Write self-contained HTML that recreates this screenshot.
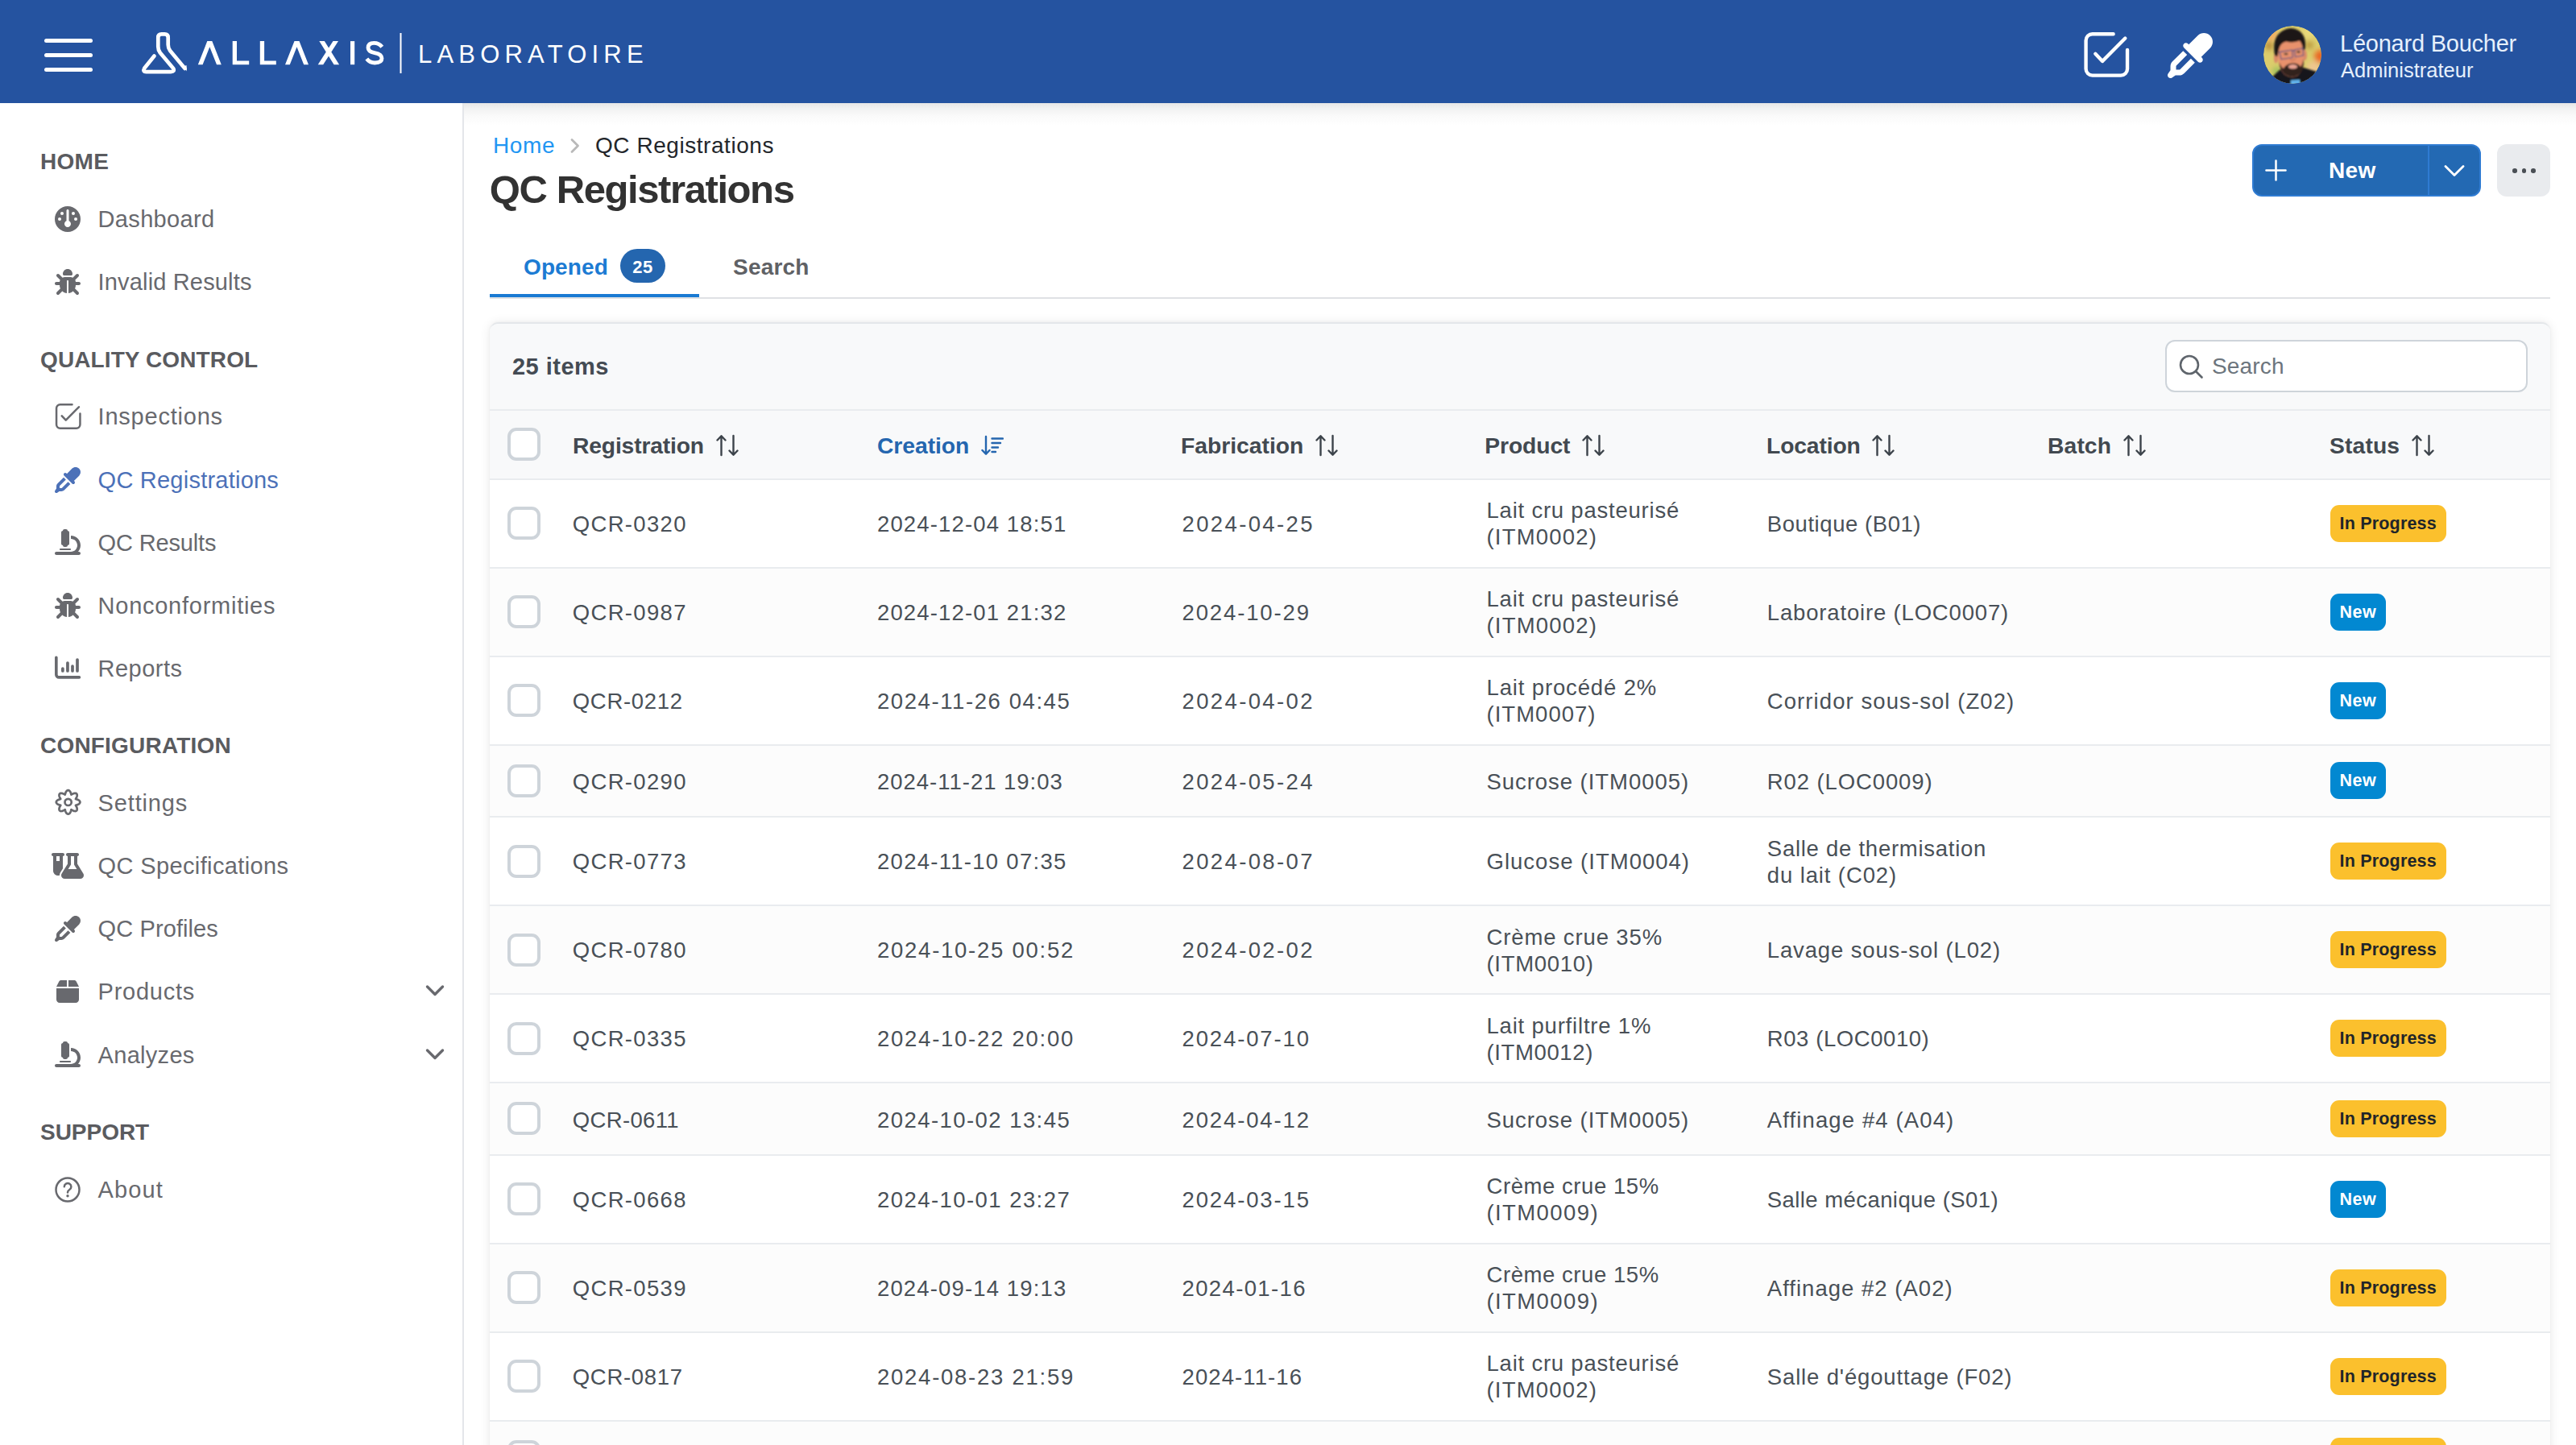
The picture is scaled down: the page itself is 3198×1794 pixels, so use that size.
<!DOCTYPE html>
<html lang="en"><head><meta charset="utf-8"><title>QC Registrations</title>
<style>
*{box-sizing:border-box}
html,body{margin:0;padding:0}
body{width:3198px;height:1794px;overflow:hidden;background:#fff;font-family:"Liberation Sans",sans-serif;color:#495057;position:relative}
.ic{display:block;overflow:visible}
#hdr{position:absolute;left:0;top:0;width:3198px;height:128px;background:#2553a0;z-index:5}
#burger{position:absolute;left:55px;top:48px;width:60px;height:42px}
#burger i{position:absolute;left:0;width:60px;height:5px;border-radius:3px;background:#fff}
#logo{position:absolute;left:170px;top:30px}
#hico1{position:absolute;left:2585.900px;top:40.300px;color:#fff}
#hico2{position:absolute;left:2691px;top:41px;color:#fff}
#avatar{position:absolute;left:2810px;top:32px;width:72px;height:72px;border-radius:50%;overflow:hidden}
#uname{position:absolute;left:2905px;top:36px;font-size:29px;color:#e6f0fc;letter-spacing:-.23px;white-space:nowrap;line-height:36px}
#urole{position:absolute;left:2906px;top:70.700px;font-size:25.500px;color:#e6f0fc;letter-spacing:0;white-space:nowrap;line-height:32px}
#side{position:absolute;left:0;top:128px;width:576px;height:1666px;background:#fff;border-right:2px solid #e4e6ea}
.sl{position:absolute;left:50px;height:40px;line-height:40px;font-size:28px;font-weight:700;color:#5a5b5f;letter-spacing:0;white-space:nowrap;margin-top:-128px}
.si{position:absolute;left:0;width:574px;height:48px;margin-top:-128px;color:#68696e}
.si.sel{color:#4c71b8}
.sic2{position:absolute;top:8px;height:32px;display:block}
.st{position:absolute;left:121.600px;top:0;line-height:48px;font-size:29px;white-space:nowrap}
.chev{position:absolute;left:528px;top:15px}
#main{position:absolute;left:576px;top:128px;width:2622px;height:1666px;background:linear-gradient(#e7e7e7 0,#f2f2f2 7px,#fafafa 16px,#fff 28px)}
#bc{position:absolute;left:612px;top:160.600px;height:40px;line-height:40px;font-size:28px;white-space:nowrap}
#bc a{color:#2196f3;letter-spacing:.6px}
#bc b{font-weight:400;color:#23262b;letter-spacing:.55px;position:absolute;left:127px}
#bc svg{position:absolute;left:96.300px;top:10px}
#title{position:absolute;left:607.800px;top:205px;font-size:49px;font-weight:700;color:#323232;line-height:60px;white-space:nowrap;letter-spacing:-1.41px}
#btnnew{position:absolute;left:2796px;top:179px;width:284px;height:65px;border-radius:12px;background:#2369b3;border:2px solid #2f7bd2;color:#fff}
#btnnew .pl{position:absolute;left:14px;top:17px}
#btnnew .tx{position:absolute;left:93px;top:0;line-height:62px;font-size:28px;font-weight:700;letter-spacing:.4px}
#btnnew .sp{position:absolute;left:216px;top:0;width:2px;height:61px;background:#2f7bd2}
#btnnew .cv{position:absolute;left:236px;top:23px}
#btnmore{position:absolute;left:3100px;top:179px;width:66px;height:65px;border-radius:12px;background:#e9ebee}
#btnmore i{position:absolute;top:30px;width:5.500px;height:5.500px;border-radius:50%;background:#4a4f55}
#tabs{position:absolute;left:608px;top:288px;width:2558px;height:83px;border-bottom:2px solid #dfe1e4}
#tab1{position:absolute;left:0;top:0;width:260px;height:81px;border-bottom:4px solid #1a7ad3;color:#1c7bd3;font-weight:700;font-size:28px}
#tab1 .t{position:absolute;left:42px;top:23px;line-height:42px;letter-spacing:.1px}
#tab1 .b{position:absolute;left:162px;top:21px;width:56px;height:42px;border-radius:21px;background:#2466af;color:#fff;font-size:22px;line-height:45px;text-align:center;letter-spacing:.5px}
#tab2{position:absolute;left:302px;top:23px;line-height:42px;color:#5f6165;font-weight:700;font-size:28px;letter-spacing:.2px}
#card{position:absolute;left:608px;top:399.500px;width:2558px;height:1500px;border-top:2px solid #e4e7ea;border-radius:11px;background:#fff;box-shadow:0 1px 14px rgba(0,0,0,.09),0 0 3px rgba(0,0,0,.05);overflow:hidden}
#tool{height:108px;background:#f8f9fa;border-bottom:2px solid #e9ecef;position:relative}
#cnt{position:absolute;left:28px;top:31.500px;line-height:44px;font-size:29px;font-weight:700;color:#444b53;letter-spacing:0.49px}
#srch{position:absolute;left:2080px;top:20px;width:450px;height:65px;border:2px solid #ced4da;border-radius:12px;background:#fff}
#srch svg{position:absolute;left:14px;top:15px;color:#5f656c}
#srch span{position:absolute;left:56px;top:0;line-height:61px;font-size:28px;color:#6c757d;letter-spacing:.15px}
.th{height:86px;background:#f8f9fa;border-bottom:2px solid #e9ecef;display:flex;font-weight:700;color:#424950;font-size:28.250px}
.th .c{display:flex;align-items:center}
.th .c span.t{position:relative;top:2.250px;left:.8px}
.sic{margin-left:15.500px;color:#3d444b;display:block;position:relative;top:1px}
.th .srt{color:#2466af} .th .srt .sic{color:#2466af}
.tr{display:flex;border-bottom:2px solid #e9ecef;background:#fff;font-size:27.500px;color:#495057}
.tr.alt{background:#fcfcfc}
.r2{height:110px} .r1{height:89.500px}
.c{display:flex;align-items:center;flex:none;padding-left:25.500px;white-space:nowrap;line-height:33px}
.c0{width:77px;padding-left:22px}
.c1{width:378.500px;padding-left:25.800px}
.c2{width:378.500px}
.c3{width:378px}
.c4{width:349.500px}
.c5{width:349.500px}
.tr .c5{padding-left:24.300px}
.c6{width:349px}
.c7{width:270px;padding-left:24.500px}
.tr .c1>span,.tr .c2>span,.tr .c3>span,.tr .c4>div,.tr .c5>div{position:relative;top:.700px}
.r1 .c1>span,.r1 .c2>span,.r1 .c3>span,.r1 .c4>div,.r1 .c5>div{top:1.700px}
.cb{display:block;width:41px;height:41px;border:4px solid #ced4da;border-radius:11px;background:#fff}
.bd{display:inline-block;height:46px;line-height:46px;border-radius:11px;font-size:21.500px;font-weight:700;padding:0 12px;letter-spacing:.19px}
.bn{letter-spacing:.55px;padding:0 12px}
.bp{background:#fbc02d;color:#212529}
.bn{background:#0288d1;color:#fff}
</style></head><body>
<div id="main"></div>
<div id="side">
<div class="sl" style="top:181.3px;letter-spacing:0.3px">HOME</div>
<div class="si" style="top:247.7px"><span class="sic2" style="left:68px;width:32px"><svg class="ic" viewBox="0 0 512 512" width="32" height="32" style="" fill="currentColor"><path d="M0 256a256 256 0 1 1 512 0A256 256 0 1 1 0 256zm320 96c0-26.9-16.5-49.9-40-59.3V88c0-13.3-10.700-24-24-24s-24 10.700-24 24V292.700c-23.500 9.500-40 32.500-40 59.300c0 35.300 28.700 64 64 64s64-28.700 64-64zM144 176a32 32 0 1 0 0-64 32 32 0 1 0 0 64zm-16 80a32 32 0 1 0 -64 0 32 32 0 1 0 64 0zm288 32a32 32 0 1 0 0-64 32 32 0 1 0 0 64zM400 144a32 32 0 1 0 -64 0 32 32 0 1 0 64 0z"/></svg></span><span class="st" style="letter-spacing:0.33px">Dashboard</span></div>
<div class="si" style="top:326.2px"><span class="sic2" style="left:68px;width:32px"><svg class="ic" viewBox="0 0 512 512" width="32" height="32" style="" fill="currentColor"><path d="M256 0c53 0 96 43 96 96v3.600c0 15.700-12.700 28.400-28.400 28.400H188.400c-15.700 0-28.400-12.700-28.400-28.400V96c0-53 43-96 96-96zM41.400 105.400c12.500-12.500 32.800-12.500 45.300 0l64 64c.7 .7 1.300 1.400 1.900 2.100c14.200-7.300 30.400-11.400 47.500-11.400H312c17.100 0 33.200 4.100 47.500 11.400c.6-.7 1.200-1.400 1.900-2.100l64-64c12.500-12.500 32.800-12.500 45.300 0s12.500 32.800 0 45.300l-64 64c-.7 .7-1.400 1.300-2.100 1.900c6.200 12 10.100 25.300 11.100 39.500H480c17.700 0 32 14.300 32 32s-14.300 32-32 32H416c0 24.600-5.500 47.800-15.400 68.600c2.200 1.300 4.200 2.900 6 4.800l64 64c12.500 12.500 12.500 32.800 0 45.300s-32.800 12.500-45.300 0l-63.100-63.100c-24.500 21.800-55.800 36.200-90.300 39.600V240c0-8.800-7.200-16-16-16s-16 7.200-16 16V479.200c-34.500-3.400-65.800-17.800-90.300-39.600L86.600 502.600c-12.500 12.500-32.800 12.500-45.300 0s-12.500-32.800 0-45.300l64-64c1.900-1.900 3.900-3.400 6-4.800C101.500 367.800 96 344.600 96 320H32c-17.700 0-32-14.300-32-32s14.300-32 32-32H96.300c1.100-14.100 5-27.500 11.100-39.500c-.7-.6-1.400-1.200-2.100-1.900l-64-64c-12.500-12.500-12.500-32.800 0-45.300z"/></svg></span><span class="st" style="letter-spacing:0.16px">Invalid Results</span></div>
<div class="sl" style="top:426.6px;letter-spacing:0.11px">QUALITY CONTROL</div>
<div class="si" style="top:492.79999999999995px"><span class="sic2" style="left:68px;width:32px"><svg class="ic" viewBox="0 0 32 32" width="32" height="32" style="" fill="currentColor"><g fill="none" stroke="currentColor" stroke-width="2.500" stroke-linecap="round" stroke-linejoin="round"><path d="M21.500 1.250H6.650A4.600 4.600 0 0 0 2.050 5.850V26.050A4.600 4.600 0 0 0 6.650 30.650H26.850A4.600 4.600 0 0 0 31.450 26.050V12.550"/><path d="M8.760 15.300L13.750 20.600L29.900 4.260"/></g></svg></span><span class="st" style="letter-spacing:0.78px">Inspections</span></div>
<div class="si sel" style="top:572px"><span class="sic2" style="left:68px;width:32px"><svg class="ic" viewBox="0 0 512 512" width="32" height="32" style="" fill="currentColor"><path d="M341.6 29.2L240.1 130.8l-9.4-9.4c-12.5-12.5-32.8-12.5-45.3 0s-12.5 32.8 0 45.3l160 160c12.5 12.5 32.8 12.5 45.3 0s12.5-32.8 0-45.3l-9.4-9.4L482.8 170.4c39-39 39-102.2 0-141.1s-102.2-39-141.1 0zM55.4 323.3c-15 15-23.4 35.4-23.4 56.6v42.4L5.4 462.2c-8.5 12.7-6.8 29.6 4 40.4s27.7 12.5 40.4 4L89.7 480h42.4c21.2 0 41.6-8.4 56.6-23.4L309.4 335.9l-45.3-45.3L143.4 411.3c-3 3-7.1 4.7-11.3 4.7H96V379.9c0-4.2 1.700-8.300 4.700-11.300L221.400 247.900l-45.300-45.300L55.400 323.300z"/></svg></span><span class="st" style="letter-spacing:0.23px">QC Registrations</span></div>
<div class="si" style="top:650px"><span class="sic2" style="left:68px;width:32px;top:7px"><svg class="ic" viewBox="0 0 512 512" width="32" height="32" style="" fill="currentColor"><path d="M160 32c0-17.700 14.300-32 32-32h32c17.700 0 32 14.300 32 32c17.700 0 32 14.300 32 32V288c0 17.700-14.300 32-32 32c0 17.700-14.300 32-32 32H192c-17.700 0-32-14.300-32-32c-17.700 0-32-14.300-32-32V64c0-17.700 14.300-32 32-32zM32 448H320c70.700 0 128-57.300 128-128s-57.300-128-128-128V128c106 0 192 86 192 192c0 49.200-18.500 94-48.900 128H480c17.700 0 32 14.300 32 32s-14.300 32-32 32H320 32c-17.700 0-32-14.300-32-32s14.300-32 32-32zm80-64H304c8.800 0 16 7.200 16 16s-7.200 16-16 16H112c-8.800 0-16-7.200-16-16s7.200-16 16-16z"/></svg></span><span class="st" style="letter-spacing:-0.16px">QC Results</span></div>
<div class="si" style="top:728.2px"><span class="sic2" style="left:68px;width:32px"><svg class="ic" viewBox="0 0 512 512" width="32" height="32" style="" fill="currentColor"><path d="M256 0c53 0 96 43 96 96v3.600c0 15.700-12.700 28.400-28.400 28.400H188.400c-15.700 0-28.400-12.700-28.400-28.400V96c0-53 43-96 96-96zM41.400 105.400c12.500-12.500 32.800-12.500 45.300 0l64 64c.7 .7 1.300 1.400 1.900 2.100c14.200-7.300 30.400-11.400 47.500-11.400H312c17.100 0 33.200 4.100 47.500 11.400c.6-.7 1.200-1.400 1.900-2.100l64-64c12.500-12.500 32.800-12.500 45.300 0s12.500 32.800 0 45.300l-64 64c-.7 .7-1.400 1.300-2.100 1.900c6.200 12 10.100 25.300 11.100 39.500H480c17.700 0 32 14.300 32 32s-14.300 32-32 32H416c0 24.600-5.500 47.800-15.400 68.600c2.200 1.300 4.200 2.900 6 4.800l64 64c12.500 12.500 12.500 32.800 0 45.300s-32.800 12.500-45.300 0l-63.100-63.100c-24.500 21.800-55.800 36.200-90.300 39.600V240c0-8.800-7.200-16-16-16s-16 7.200-16 16V479.200c-34.500-3.400-65.800-17.800-90.300-39.600L86.600 502.600c-12.500 12.500-32.800 12.500-45.300 0s-12.500-32.800 0-45.300l64-64c1.900-1.900 3.900-3.400 6-4.800C101.500 367.800 96 344.600 96 320H32c-17.700 0-32-14.300-32-32s14.300-32 32-32H96.300c1.100-14.100 5-27.500 11.100-39.500c-.7-.6-1.400-1.200-2.100-1.900l-64-64c-12.500-12.500-12.500-32.800 0-45.300z"/></svg></span><span class="st" style="letter-spacing:0.74px">Nonconformities</span></div>
<div class="si" style="top:806px"><span class="sic2" style="left:68px;width:32px"><svg class="ic" viewBox="0 0 32 32" width="32" height="32" style="" fill="currentColor"><g fill="none" stroke="currentColor" stroke-linecap="round" stroke-linejoin="round"><path stroke-width="3.600" d="M1.830 2.200V23.500A3.400 3.400 0 0 0 5.230 26.900H30.400"/><path stroke-width="3.700" d="M9.870 16.100v2.900M15.950 9v10M22 13v6M28 5v14"/></g></svg></span><span class="st" style="letter-spacing:0.46px">Reports</span></div>
<div class="sl" style="top:906px;letter-spacing:0.2px">CONFIGURATION</div>
<div class="si" style="top:972.7px"><span class="sic2" style="left:68px;width:32px"><svg class="ic" viewBox="0 0 32 32" width="32" height="32" style="" fill="currentColor"><g fill="none" stroke="currentColor" stroke-width="2.700" stroke-linejoin="round"><path d="M16.60 0.10 L17.18 0.18 L17.74 0.42 L18.27 0.81 L18.75 1.32 L19.18 1.95 L19.54 2.66 L19.84 3.43 L20.08 4.20 L20.27 4.95 L20.47 5.57 L21.04 5.27 L21.71 4.88 L22.43 4.50 L23.18 4.17 L23.93 3.92 L24.68 3.78 L25.39 3.75 L26.03 3.85 L26.60 4.08 L27.07 4.43 L27.42 4.90 L27.65 5.47 L27.75 6.11 L27.72 6.82 L27.58 7.57 L27.33 8.32 L27.00 9.07 L26.62 9.79 L26.23 10.46 L25.93 11.03 L26.55 11.23 L27.30 11.42 L28.07 11.66 L28.84 11.96 L29.55 12.32 L30.18 12.75 L30.69 13.23 L31.08 13.76 L31.32 14.32 L31.40 14.90 L31.32 15.48 L31.08 16.04 L30.69 16.57 L30.18 17.05 L29.55 17.48 L28.84 17.84 L28.07 18.14 L27.30 18.38 L26.55 18.57 L25.93 18.77 L26.23 19.34 L26.62 20.01 L27.00 20.73 L27.33 21.48 L27.58 22.23 L27.72 22.98 L27.75 23.69 L27.65 24.33 L27.42 24.90 L27.07 25.37 L26.60 25.72 L26.03 25.95 L25.39 26.05 L24.68 26.02 L23.93 25.88 L23.18 25.63 L22.43 25.30 L21.71 24.92 L21.04 24.53 L20.47 24.23 L20.27 24.85 L20.08 25.60 L19.84 26.37 L19.54 27.14 L19.18 27.85 L18.75 28.48 L18.27 28.99 L17.74 29.38 L17.18 29.62 L16.60 29.70 L16.02 29.62 L15.46 29.38 L14.93 28.99 L14.45 28.48 L14.02 27.85 L13.66 27.14 L13.36 26.37 L13.12 25.60 L12.93 24.85 L12.73 24.23 L12.16 24.53 L11.49 24.92 L10.77 25.30 L10.02 25.63 L9.27 25.88 L8.52 26.02 L7.81 26.05 L7.17 25.95 L6.60 25.72 L6.13 25.37 L5.78 24.90 L5.55 24.33 L5.45 23.69 L5.48 22.98 L5.62 22.23 L5.87 21.48 L6.20 20.73 L6.58 20.01 L6.97 19.34 L7.27 18.77 L6.65 18.57 L5.90 18.38 L5.13 18.14 L4.36 17.84 L3.65 17.48 L3.02 17.05 L2.51 16.57 L2.12 16.04 L1.88 15.48 L1.80 14.90 L1.88 14.32 L2.12 13.76 L2.51 13.23 L3.02 12.75 L3.65 12.32 L4.36 11.96 L5.13 11.66 L5.90 11.42 L6.65 11.23 L7.27 11.03 L6.97 10.46 L6.58 9.79 L6.20 9.07 L5.87 8.32 L5.62 7.57 L5.48 6.82 L5.45 6.11 L5.55 5.47 L5.78 4.90 L6.13 4.43 L6.60 4.08 L7.17 3.85 L7.81 3.75 L8.52 3.78 L9.27 3.92 L10.02 4.17 L10.77 4.50 L11.49 4.88 L12.16 5.27 L12.73 5.57 L12.93 4.95 L13.12 4.20 L13.36 3.43 L13.66 2.66 L14.02 1.95 L14.45 1.32 L14.93 0.81 L15.46 0.42 L16.02 0.18Z"/><circle cx="16.600" cy="14.900" r="4.100"/></g></svg></span><span class="st" style="letter-spacing:0.84px">Settings</span></div>
<div class="si" style="top:1050.8px"><span class="sic2" style="left:64px;width:40px"><svg class="ic" viewBox="0 0 640 512" width="40" height="32" style="" fill="currentColor"><path d="M175 389.400c-9.800 16-15 34.300-15 53.100c-10 3.500-20.800 5.500-32 5.500c-53 0-96-43-96-96V64C14.300 64 0 49.700 0 32S14.300 0 32 0H96h64 64c17.700 0 32 14.300 32 32s-14.300 32-32 32V309.900l-49 79.600zM96 64v96h64V64H96zM352 0H480h32c17.700 0 32 14.300 32 32s-14.300 32-32 32V214.900L629.700 406.200c6.700 10.900 10.300 23.500 10.300 36.400c0 38.300-31.100 69.400-69.400 69.400H261.400c-38.300 0-69.400-31.100-69.400-69.400c0-12.800 3.600-25.400 10.300-36.400L320 214.900V64c-17.700 0-32-14.300-32-32s14.300-32 32-32h32zm32 64V224c0 5.900-1.600 11.700-4.700 16.800L330.500 320h171l-48.800-79.200c-3.100-5-4.700-10.800-4.700-16.800V64H384z"/></svg></span><span class="st" style="letter-spacing:0.37px">QC Specifications</span></div>
<div class="si" style="top:1129px"><span class="sic2" style="left:68px;width:32px"><svg class="ic" viewBox="0 0 512 512" width="32" height="32" style="" fill="currentColor"><path d="M341.6 29.2L240.1 130.8l-9.4-9.4c-12.5-12.5-32.8-12.5-45.3 0s-12.5 32.8 0 45.3l160 160c12.5 12.5 32.8 12.5 45.3 0s12.5-32.8 0-45.3l-9.4-9.4L482.8 170.4c39-39 39-102.2 0-141.1s-102.2-39-141.1 0zM55.4 323.3c-15 15-23.4 35.4-23.4 56.6v42.4L5.4 462.2c-8.5 12.7-6.8 29.6 4 40.4s27.7 12.5 40.4 4L89.7 480h42.4c21.2 0 41.6-8.4 56.6-23.4L309.4 335.9l-45.3-45.3L143.4 411.3c-3 3-7.1 4.7-11.3 4.7H96V379.9c0-4.2 1.700-8.300 4.700-11.300L221.400 247.900l-45.300-45.300L55.400 323.300z"/></svg></span><span class="st" style="letter-spacing:0.1px">QC Profiles</span></div>
<div class="si" style="top:1207px"><span class="sic2" style="left:70px;width:28px"><svg class="ic" viewBox="0 0 448 512" width="28" height="32" style="" fill="currentColor"><path d="M50.700 58.500L0 160H208V32H93.700C75.500 32 58.900 42.300 50.700 58.500zM240 160H448L397.300 58.500C389.100 42.300 372.500 32 354.300 32H240V160zm208 32H0V416c0 35.300 28.700 64 64 64H384c35.300 0 64-28.700 64-64V192z"/></svg></span><span class="st" style="letter-spacing:0.75px">Products</span><svg class="chev" viewBox="0 0 24 16" width="24" height="16"><path d="M2.500 3L12 12.500L21.500 3" fill="none" stroke="currentColor" stroke-width="3.400" stroke-linecap="round" stroke-linejoin="round"/></svg></div>
<div class="si" style="top:1285.6px"><span class="sic2" style="left:68px;width:32px;top:7px"><svg class="ic" viewBox="0 0 512 512" width="32" height="32" style="" fill="currentColor"><path d="M160 32c0-17.700 14.300-32 32-32h32c17.700 0 32 14.300 32 32c17.700 0 32 14.300 32 32V288c0 17.700-14.300 32-32 32c0 17.700-14.300 32-32 32H192c-17.700 0-32-14.300-32-32c-17.700 0-32-14.300-32-32V64c0-17.700 14.300-32 32-32zM32 448H320c70.700 0 128-57.300 128-128s-57.300-128-128-128V128c106 0 192 86 192 192c0 49.200-18.500 94-48.900 128H480c17.700 0 32 14.300 32 32s-14.300 32-32 32H320 32c-17.700 0-32-14.300-32-32s14.300-32 32-32zm80-64H304c8.800 0 16 7.200 16 16s-7.200 16-16 16H112c-8.800 0-16-7.200-16-16s7.200-16 16-16z"/></svg></span><span class="st" style="letter-spacing:0.29px">Analyzes</span><svg class="chev" viewBox="0 0 24 16" width="24" height="16"><path d="M2.500 3L12 12.500L21.500 3" fill="none" stroke="currentColor" stroke-width="3.400" stroke-linecap="round" stroke-linejoin="round"/></svg></div>
<div class="sl" style="top:1386px;letter-spacing:-0.03px">SUPPORT</div>
<div class="si" style="top:1452.7px"><span class="sic2" style="left:68px;width:32px"><svg class="ic" viewBox="0 0 32 32" width="32" height="32" style="" fill="currentColor"><g fill="none" stroke="currentColor" stroke-width="2.500" stroke-linecap="round" stroke-linejoin="round"><circle cx="16" cy="16" r="14.500"/><path d="M11.800 12.300a4.300 4.300 0 1 1 6.500 3.700c-1.400 .8-2.300 1.600-2.300 3.400"/></g><circle cx="16" cy="23.700" r="1.700" fill="currentColor"/></svg></span><span class="st" style="letter-spacing:1.1px">About</span></div>
</div>
<div id="hdr">
 <div id="burger"><i style="top:0"></i><i style="top:18px"></i><i style="top:36px"></i></div>
 <svg id="logo" width="650" height="70" viewBox="170 30 650 70">
  <g fill="none" stroke="#fff" stroke-width="4.700" stroke-linecap="round" stroke-linejoin="round">
   <path d="M191.500 69.500L179.200 84.800Q176.800 89.100 181.500 89.200H212Q217.400 88.900 215 84.800L198.800 65.500Q196.300 62.300 196.300 58V46.500Q196.300 42.300 200.500 42.300H204.500Q208.700 42.300 208.700 46.500V55.500Q208.700 59.800 211.200 63L229.500 85"/>
  </g>
  <path d="M228 82.500L232 88.500L231.500 81z" fill="#fff"/>
  <g fill="#fff">
   <path d="M245.800 80.200L257.300 51.100H263.300L274.800 80.200H269L260.300 58.200L251.600 80.200z"/>
   <path d="M288.700 51.100H294V75.600H309.200V80.200H288.700z"/>
   <path d="M322.800 51.100H328.100V75.600H342.800V80.200H322.800z"/>
   <path d="M354 80.200L365.500 51.100H371.500L383 80.200H377.200L368.500 58.200L359.800 80.200z"/>
   <path d="M396.300 51.100H402.800L421.100 80.200H414.600z"/>
   <path d="M420 51.100H413.500L394.700 80.200H401.200z"/>
   <path d="M435 51.100H440.200V80.200H435z"/>
  </g>
  <path d="M474.300 58.300Q470.500 53.300 464.300 53.300Q457 53.300 457 59.300Q457 64.200 465 65.600Q474 67.200 474 72.600Q474 78 465.300 78Q459 78 455.300 73" fill="none" stroke="#fff" stroke-width="4.800"/>
  <g fill="#fff" font-family="Liberation Sans, sans-serif">
   <rect x="496.500" y="41" width="2" height="50"/>
   <text x="519" y="77.500" font-size="31" letter-spacing="6.200">LABORATOIRE</text>
  </g>
 </svg>
 <div id="hico1"><svg class="ic" viewBox="0 0 32 32" width="56" height="56" style="" fill="currentColor"><g fill="none" stroke="currentColor" stroke-width="2.500" stroke-linecap="round" stroke-linejoin="round"><path d="M21.500 1.250H6.650A4.600 4.600 0 0 0 2.050 5.850V26.050A4.600 4.600 0 0 0 6.650 30.650H26.850A4.600 4.600 0 0 0 31.450 26.050V12.550"/><path d="M8.760 15.300L13.750 20.600L29.900 4.260"/></g></svg></div>
 <div id="hico2"><svg class="ic" viewBox="0 0 512 512" width="56" height="56" style="" fill="currentColor"><path d="M341.6 29.2L240.1 130.8l-9.4-9.4c-12.5-12.5-32.8-12.5-45.3 0s-12.5 32.8 0 45.3l160 160c12.5 12.5 32.8 12.5 45.3 0s12.5-32.8 0-45.3l-9.4-9.4L482.8 170.4c39-39 39-102.2 0-141.1s-102.2-39-141.1 0zM55.4 323.3c-15 15-23.4 35.4-23.4 56.6v42.4L5.4 462.2c-8.5 12.7-6.8 29.6 4 40.4s27.7 12.5 40.4 4L89.7 480h42.4c21.2 0 41.6-8.4 56.6-23.4L309.4 335.9l-45.3-45.3L143.4 411.3c-3 3-7.1 4.7-11.3 4.7H96V379.9c0-4.2 1.700-8.300 4.700-11.300L221.400 247.900l-45.300-45.300L55.400 323.300z"/></svg></div>
 <div id="avatar"><svg width="72" height="72" viewBox="0 0 72 72"><defs><clipPath id="ac"><circle cx="36" cy="36" r="36"/></clipPath><filter id="ab" x="-20%" y="-20%" width="140%" height="140%"><feGaussianBlur stdDeviation=".85"/></filter><filter id="ab2" x="-50%" y="-50%" width="200%" height="200%"><feGaussianBlur stdDeviation="3"/></filter></defs>
  <g clip-path="url(#ac)"><rect width="72" height="72" fill="#dccd6c"/>
   <g filter="url(#ab2)"><circle cx="71" cy="38" r="8" fill="#ea6622"/><circle cx="10" cy="11" r="8" fill="#f1ae64"/><circle cx="7" cy="25" r="5" fill="#b58636"/><circle cx="57" cy="24" r="5" fill="#b9963c"/><circle cx="62" cy="52" r="8" fill="#efc690"/><circle cx="17" cy="57" r="6" fill="#9dc05c"/><circle cx="56" cy="8" r="8" fill="#e9d97a"/></g>
   <g filter="url(#ab)">
    <path d="M6 68L21 54L50 52L66 57L74 74H0z" fill="#16151a"/>
    <ellipse cx="15.500" cy="40" rx="2.600" ry="6.500" fill="#d98868"/><ellipse cx="51.500" cy="36.500" rx="2.400" ry="6.500" fill="#d98868"/>
    <path d="M17 30Q17 15 33 15Q50 14 50.500 30L50 46Q48 58 42 62Q35 66 27 61Q20 55 18.500 44z" fill="#e8916c"/>
    <path d="M14 37Q10 14 24 6Q34 0 44 6Q54 13 51.500 30L49 30Q48.500 23 45 18.500Q36 22 28 19.500Q20 22 19 30L17.500 38z" fill="#1b1719"/>
    <path d="M19.500 45Q21.500 51 25 53Q28 47 36 46.500Q43.500 46 46 51Q49 47 49.800 41Q51 54 44 60.500Q36 66 27.500 61Q20 55 19.500 45z" fill="#33211f"/>
    <ellipse cx="36.500" cy="50.800" rx="5.600" ry="2.700" fill="#eaa392"/>
    <path d="M33 41.500Q36 44.500 40 41" stroke="#c8755a" stroke-width="1.200" fill="none"/>
    <g fill="none" stroke="#4a4c84" stroke-width="1.300" stroke-linejoin="round" opacity=".85"><path d="M20 32.500L35.500 30.200L36.500 39.300L22 41.600z"/><path d="M38.500 29.800L49 27.800L49.500 36.800L39.500 38.600z"/><path d="M35.500 31L38.500 30.500"/></g>
    <ellipse cx="28" cy="35" rx="2.600" ry="1.300" fill="#3a3a30"/><ellipse cx="43.500" cy="32.500" rx="2.400" ry="1.300" fill="#3a3a30"/>
    <path d="M34 67.500L45 67L45.500 73H34z" fill="#62b4ee"/>
   </g>
  </g></svg></div>
 <div id="uname">Léonard Boucher</div>
 <div id="urole">Administrateur</div>
</div>
<div id="bc"><a>Home</a><svg width="12" height="20" viewBox="0 0 12 20"><path d="M2 2.500L9.500 10L2 17.500" fill="none" stroke="#b9b9b9" stroke-width="2.800" stroke-linecap="round" stroke-linejoin="round"/></svg><b>QC Registrations</b></div>
<div id="title">QC Registrations</div>
<div id="btnnew"><svg class="pl" width="27" height="27" viewBox="0 0 28 28"><path d="M14 1.500V26.500M1.500 14H26.500" stroke="#fff" stroke-width="2.600" stroke-linecap="round"/></svg><span class="tx">New</span><i class="sp"></i><svg class="cv" width="26" height="16" viewBox="0 0 26 16"><path d="M2 2.500L13 13.500L24 2.500" fill="none" stroke="#fff" stroke-width="2.800" stroke-linecap="round" stroke-linejoin="round"/></svg></div>
<div id="btnmore"><i style="left:19px"></i><i style="left:30.500px"></i><i style="left:42px"></i></div>
<div id="tabs"><div id="tab1"><span class="t">Opened</span><span class="b">25</span></div><div id="tab2">Search</div></div>
<div id="card">
 <div id="tool"><div id="cnt">25 items</div><div id="srch"><svg width="32" height="32" viewBox="0 0 32 32"><g fill="none" stroke="currentColor" stroke-width="2.600" stroke-linecap="round"><circle cx="14" cy="14" r="11"/><path d="M22 22L29.500 29.500"/></g></svg><span>Search</span></div></div>
 <div class="th"><div class="c c0"><span class="cb"></span></div><div class="c c1" style="letter-spacing:-0.16px"><span class="t" style="margin-left:-.6px">Registration</span><svg class="sic" viewBox="0 0 28 28" width="28" height="28"><g fill="none" stroke="currentColor" stroke-width="2.400" stroke-linecap="round" stroke-linejoin="round"><path d="M6.500 26V2.500M1.500 7.500L6.500 2.200L11.500 7.500"/><path d="M21.500 2V25.500M16.500 20.500L21.500 25.800L26.500 20.500"/></g></svg></div><div class="c c2 srt" style="letter-spacing:-0.04px"><span class="t" style="margin-left:-0.8px">Creation</span><svg class="sic" viewBox="0 0 28 28" width="28" height="28"><g fill="none" stroke="currentColor" stroke-width="2.400" stroke-linecap="round" stroke-linejoin="round"><path d="M6 3V24.500M1.500 20L6 24.800L10.500 20"/><path d="M13.500 5.500H27M13.500 11H24M13.500 16.500H21M13.500 22H18"/></g></svg></div><div class="c c3" style="letter-spacing:0.0px"><span class="t" style="margin-left:-2.3px">Fabrication</span><svg class="sic" viewBox="0 0 28 28" width="28" height="28"><g fill="none" stroke="currentColor" stroke-width="2.400" stroke-linecap="round" stroke-linejoin="round"><path d="M6.500 26V2.500M1.500 7.500L6.500 2.200L11.500 7.500"/><path d="M21.500 2V25.500M16.500 20.500L21.500 25.800L26.500 20.500"/></g></svg></div><div class="c c4" style="letter-spacing:-0.1px"><span class="t" style="margin-left:-3.0px">Product</span><svg class="sic" viewBox="0 0 28 28" width="28" height="28"><g fill="none" stroke="currentColor" stroke-width="2.400" stroke-linecap="round" stroke-linejoin="round"><path d="M6.500 26V2.500M1.500 7.500L6.500 2.200L11.500 7.500"/><path d="M21.500 2V25.500M16.500 20.500L21.500 25.800L26.500 20.500"/></g></svg></div><div class="c c5" style="letter-spacing:-0.13px"><span class="t" style="margin-left:-2.8px">Location</span><svg class="sic" viewBox="0 0 28 28" width="28" height="28"><g fill="none" stroke="currentColor" stroke-width="2.400" stroke-linecap="round" stroke-linejoin="round"><path d="M6.500 26V2.500M1.500 7.500L6.500 2.200L11.500 7.500"/><path d="M21.500 2V25.500M16.500 20.500L21.500 25.800L26.500 20.500"/></g></svg></div><div class="c c6" style="letter-spacing:0.08px"><span class="t" style="margin-left:-3.2px">Batch</span><svg class="sic" viewBox="0 0 28 28" width="28" height="28"><g fill="none" stroke="currentColor" stroke-width="2.400" stroke-linecap="round" stroke-linejoin="round"><path d="M6.500 26V2.500M1.500 7.500L6.500 2.200L11.500 7.500"/><path d="M21.500 2V25.500M16.500 20.500L21.500 25.800L26.500 20.500"/></g></svg></div><div class="c c7" style="letter-spacing:0.15px"><span class="t" style="margin-left:-1.3px">Status</span><svg class="sic" viewBox="0 0 28 28" width="28" height="28"><g fill="none" stroke="currentColor" stroke-width="2.400" stroke-linecap="round" stroke-linejoin="round"><path d="M6.500 26V2.500M1.500 7.500L6.500 2.200L11.500 7.500"/><path d="M21.500 2V25.500M16.500 20.500L21.500 25.800L26.500 20.500"/></g></svg></div></div>
<div class="tr r2 "><div class="c c0"><span class="cb"></span></div><div class="c c1"><span style="letter-spacing:1.32px">QCR-0320</span></div><div class="c c2"><span style="letter-spacing:1.14px">2024-12-04 18:51</span></div><div class="c c3"><span style="letter-spacing:2.37px">2024-04-25</span></div><div class="c c4"><div><span style="letter-spacing:0.78px">Lait cru pasteurisé</span><br><span style="letter-spacing:1.21px">(ITM0002)</span></div></div><div class="c c5"><div><span style="letter-spacing:0.56px">Boutique (B01)</span></div></div><div class="c c6"></div><div class="c c7"><span class="bd bp">In Progress</span></div></div>
<div class="tr r2 alt"><div class="c c0"><span class="cb"></span></div><div class="c c1"><span style="letter-spacing:1.32px">QCR-0987</span></div><div class="c c2"><span style="letter-spacing:1.14px">2024-12-01 21:32</span></div><div class="c c3"><span style="letter-spacing:1.87px">2024-10-29</span></div><div class="c c4"><div><span style="letter-spacing:0.78px">Lait cru pasteurisé</span><br><span style="letter-spacing:1.21px">(ITM0002)</span></div></div><div class="c c5"><div><span style="letter-spacing:0.83px">Laboratoire (LOC0007)</span></div></div><div class="c c6"></div><div class="c c7"><span class="bd bn">New</span></div></div>
<div class="tr r2 "><div class="c c0"><span class="cb"></span></div><div class="c c1"><span style="letter-spacing:0.68px">QCR-0212</span></div><div class="c c2"><span style="letter-spacing:1.58px">2024-11-26 04:45</span></div><div class="c c3"><span style="letter-spacing:2.37px">2024-04-02</span></div><div class="c c4"><div><span style="letter-spacing:0.86px">Lait procédé 2%</span><br><span style="letter-spacing:1.02px">(ITM0007)</span></div></div><div class="c c5"><div><span style="letter-spacing:1.08px">Corridor sous-sol (Z02)</span></div></div><div class="c c6"></div><div class="c c7"><span class="bd bn">New</span></div></div>
<div class="tr r1 alt"><div class="c c0"><span class="cb"></span></div><div class="c c1"><span style="letter-spacing:1.32px">QCR-0290</span></div><div class="c c2"><span style="letter-spacing:0.98px">2024-11-21 19:03</span></div><div class="c c3"><span style="letter-spacing:2.37px">2024-05-24</span></div><div class="c c4"><div><span style="letter-spacing:0.95px">Sucrose (ITM0005)</span></div></div><div class="c c5"><div><span style="letter-spacing:0.89px">R02 (LOC0009)</span></div></div><div class="c c6"></div><div class="c c7"><span class="bd bn">New</span></div></div>
<div class="tr r2 "><div class="c c0"><span class="cb"></span></div><div class="c c1"><span style="letter-spacing:1.32px">QCR-0773</span></div><div class="c c2"><span style="letter-spacing:1.28px">2024-11-10 07:35</span></div><div class="c c3"><span style="letter-spacing:2.37px">2024-08-07</span></div><div class="c c4"><div><span style="letter-spacing:1.01px">Glucose (ITM0004)</span></div></div><div class="c c5"><div><span style="letter-spacing:0.74px">Salle de thermisation</span><br><span style="letter-spacing:0.88px">du lait (C02)</span></div></div><div class="c c6"></div><div class="c c7"><span class="bd bp">In Progress</span></div></div>
<div class="tr r2 alt"><div class="c c0"><span class="cb"></span></div><div class="c c1"><span style="letter-spacing:1.32px">QCR-0780</span></div><div class="c c2"><span style="letter-spacing:1.74px">2024-10-25 00:52</span></div><div class="c c3"><span style="letter-spacing:2.37px">2024-02-02</span></div><div class="c c4"><div><span style="letter-spacing:0.87px">Crème crue 35%</span><br><span style="letter-spacing:0.71px">(ITM0010)</span></div></div><div class="c c5"><div><span style="letter-spacing:0.86px">Lavage sous-sol (L02)</span></div></div><div class="c c6"></div><div class="c c7"><span class="bd bp">In Progress</span></div></div>
<div class="tr r2 "><div class="c c0"><span class="cb"></span></div><div class="c c1"><span style="letter-spacing:1.32px">QCR-0335</span></div><div class="c c2"><span style="letter-spacing:1.74px">2024-10-22 20:00</span></div><div class="c c3"><span style="letter-spacing:1.87px">2024-07-10</span></div><div class="c c4"><div><span style="letter-spacing:0.8px">Lait purfiltre 1%</span><br><span style="letter-spacing:0.62px">(ITM0012)</span></div></div><div class="c c5"><div><span style="letter-spacing:0.57px">R03 (LOC0010)</span></div></div><div class="c c6"></div><div class="c c7"><span class="bd bp">In Progress</span></div></div>
<div class="tr r1 alt"><div class="c c0"><span class="cb"></span></div><div class="c c1"><span style="letter-spacing:0.33px">QCR-0611</span></div><div class="c c2"><span style="letter-spacing:1.44px">2024-10-02 13:45</span></div><div class="c c3"><span style="letter-spacing:1.87px">2024-04-12</span></div><div class="c c4"><div><span style="letter-spacing:0.95px">Sucrose (ITM0005)</span></div></div><div class="c c5"><div><span style="letter-spacing:1.12px">Affinage #4 (A04)</span></div></div><div class="c c6"></div><div class="c c7"><span class="bd bp">In Progress</span></div></div>
<div class="tr r2 "><div class="c c0"><span class="cb"></span></div><div class="c c1"><span style="letter-spacing:1.32px">QCR-0668</span></div><div class="c c2"><span style="letter-spacing:1.44px">2024-10-01 23:27</span></div><div class="c c3"><span style="letter-spacing:1.87px">2024-03-15</span></div><div class="c c4"><div><span style="letter-spacing:0.56px">Crème crue 15%</span><br><span style="letter-spacing:1.4px">(ITM0009)</span></div></div><div class="c c5"><div><span style="letter-spacing:0.43px">Salle mécanique (S01)</span></div></div><div class="c c6"></div><div class="c c7"><span class="bd bn">New</span></div></div>
<div class="tr r2 alt"><div class="c c0"><span class="cb"></span></div><div class="c c1"><span style="letter-spacing:1.32px">QCR-0539</span></div><div class="c c2"><span style="letter-spacing:1.14px">2024-09-14 19:13</span></div><div class="c c3"><span style="letter-spacing:1.37px">2024-01-16</span></div><div class="c c4"><div><span style="letter-spacing:0.56px">Crème crue 15%</span><br><span style="letter-spacing:1.4px">(ITM0009)</span></div></div><div class="c c5"><div><span style="letter-spacing:1.02px">Affinage #2 (A02)</span></div></div><div class="c c6"></div><div class="c c7"><span class="bd bp">In Progress</span></div></div>
<div class="tr r2 "><div class="c c0"><span class="cb"></span></div><div class="c c1"><span style="letter-spacing:0.68px">QCR-0817</span></div><div class="c c2"><span style="letter-spacing:1.74px">2024-08-23 21:59</span></div><div class="c c3"><span style="letter-spacing:1.1px">2024-11-16</span></div><div class="c c4"><div><span style="letter-spacing:0.78px">Lait cru pasteurisé</span><br><span style="letter-spacing:1.21px">(ITM0002)</span></div></div><div class="c c5"><div><span style="letter-spacing:0.85px">Salle d'égouttage (F02)</span></div></div><div class="c c6"></div><div class="c c7"><span class="bd bp">In Progress</span></div></div>
<div class="tr r1 alt"><div class="c c0"><span class="cb"></span></div><div class="c c1"><span style="letter-spacing:1.32px">QCR-0000</span></div><div class="c c2"><span style="letter-spacing:1.44px">2024-08-20 10:10</span></div><div class="c c3"><span style="letter-spacing:1.87px">2024-06-01</span></div><div class="c c4"><div><span style="letter-spacing:0.95px">Sucrose (ITM0005)</span></div></div><div class="c c5"><div><span style="letter-spacing:0.56px">Boutique (B01)</span></div></div><div class="c c6"></div><div class="c c7"><span class="bd bp">In Progress</span></div></div>

</div>
</body></html>
